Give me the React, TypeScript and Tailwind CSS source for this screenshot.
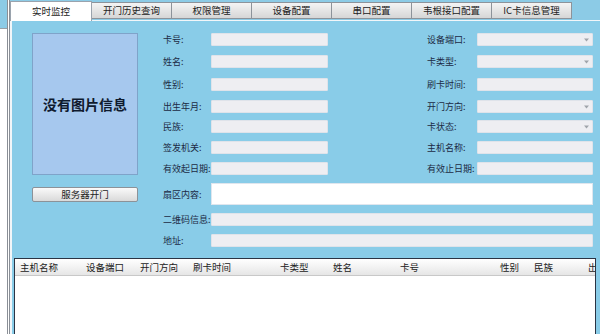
import type React from 'react';

const TABS = ['实时监控', '开门历史查询', '权限管理', '设备配置', '串口配置', '韦根接口配置', 'IC卡信息管理'];

const COLUMNS = [
  { label: '主机名称', w: 'w-[66px]' },
  { label: '设备端口', w: 'w-[54px]' },
  { label: '开门方向', w: 'w-[53px]' },
  { label: '刷卡时间', w: 'w-[87px]' },
  { label: '卡类型', w: 'w-[53px]' },
  { label: '姓名', w: 'w-[67px]' },
  { label: '卡号', w: 'w-[100px]' },
  { label: '性别', w: 'w-[34px]' },
  { label: '民族', w: 'w-[54px]' },
  { label: '出生年月', w: 'w-[60px]' },
];

type Row = { left: string; right: string; rightSelect: boolean; mt: string };

const ROWS: Row[] = [
  { left: '卡号:', right: '设备端口:', rightSelect: true, mt: 'mt-0' },
  { left: '姓名:', right: '卡类型:', rightSelect: true, mt: 'mt-[9px]' },
  { left: '性别:', right: '刷卡时间:', rightSelect: false, mt: 'mt-[10px]' },
  { left: '出生年月:', right: '开门方向:', rightSelect: true, mt: 'mt-[9px]' },
  { left: '民族:', right: '卡状态:', rightSelect: true, mt: 'mt-[7px]' },
  { left: '签发机关:', right: '主机名称:', rightSelect: false, mt: 'mt-[8px]' },
  { left: '有效起日期:', right: '有效止日期:', rightSelect: false, mt: 'mt-[8px]' },
];

const Field: React.FC<{ select?: boolean; className?: string }> = ({ select, className }) => (
  <div
    className={`relative shrink-0 h-[13px] bg-[#eeeef2] border border-[#dfe3ea] rounded-[1px] ${className ?? ''}`}
  >
    {select && (
      <svg className="absolute right-[3px] top-[4px] w-[5px] h-[4px]" viewBox="0 0 5 4">
        <path d="M0 0.5h5L2.5 3.5z" fill="#a0a4aa" />
      </svg>
    )}
  </div>
);

const Label: React.FC<{ text: string; className?: string }> = ({ text, className }) => (
  <div
    className={`shrink-0 overflow-visible text-[9px] leading-[13px] text-[#1c2a44] whitespace-nowrap ${className ?? ''}`}
  >
    {text}
  </div>
);

export default function App() {
  return (
    <div
      className="w-[600px] h-[334px] overflow-hidden bg-white flex"
      style={{ fontFamily: '"Noto Sans CJK SC", "Noto Sans", sans-serif' }}
    >
      {/* left window edge */}
      <div className="w-[10px] shrink-0 flex flex-col border-r-[3px] border-double border-[#8a8f96]">
        <div className="h-[29px] bg-[#8ccbe6] border-b border-[#9aa0a6]" />
        <div className="flex-1 bg-white" />
      </div>

      <div className="flex-1 min-w-0 flex flex-col bg-[#8ccbe6]">
        {/* tabs */}
        <div className="h-[20px] shrink-0 flex items-end">
          {TABS.map((t, i) =>
            i === 0 ? (
              <div
                key={t}
                className="w-[82px] shrink-0 h-[20px] bg-white border border-b-0 border-[#9aa3ad] flex items-center justify-center text-[9.5px] text-[#222] -mb-px z-10"
              >
                {t}
              </div>
            ) : (
              <div
                key={t}
                className="w-[80px] shrink-0 h-[17px] mb-[1px] bg-gradient-to-b from-[#f4f4f4] to-[#d6d6d6] border border-l-0 border-[#8d939a] flex items-center justify-center text-[9.5px] text-[#222]"
              >
                {t}
              </div>
            ),
          )}
        </div>

        {/* tab page */}
        <div className="flex-1 min-h-0 border-t border-l-2 border-[#f2f6f9] bg-[#89cce8] flex flex-col pt-[12px] pr-[4px]">
          <div className="flex">
            <div className="ml-[20px] shrink-0 w-[106px] h-[142px] bg-[#a6c8ee] border border-[#7fa3c9] flex items-center justify-center">
              <span className="text-[14px] font-bold text-[#0f1a2e]">没有图片信息</span>
            </div>
            <div className="ml-[25px] flex flex-col">
              {ROWS.map((r) => (
                <div key={r.left} className={`flex items-center ${r.mt}`}>
                  <Label text={r.left} className="w-[48px]" />
                  <Field className="w-[117px]" />
                  <Label text={r.right} className="ml-[99px] w-[50px]" />
                  <Field select={r.rightSelect} className="w-[116px]" />
                </div>
              ))}
            </div>
          </div>

          <div className="flex items-center mt-[8px]">
            <div className="ml-[20px] shrink-0 w-[106px]">
              <div className="h-[15px] bg-gradient-to-b from-[#fafafa] to-[#d9d9d9] border border-[#8c9298] rounded-[2px] flex items-center justify-center text-[9.5px] text-[#222]">
                服务器开门
              </div>
            </div>
            <Label text="扇区内容:" className="ml-[25px] w-[48px]" />
            <div className="w-[382px] shrink-0 h-[22px] bg-white border border-[#dfe6ee]" />
          </div>

          <div className="flex items-center mt-[8px] pl-[151px]">
            <Label text="二维码信息:" className="w-[48px]" />
            <Field className="w-[382px]" />
          </div>
          <div className="flex items-center mt-[8px] pl-[151px]">
            <Label text="地址:" className="w-[48px]" />
            <Field className="w-[382px]" />
          </div>

          {/* table */}
          <div className="mt-[11px] ml-[2px] flex-1 bg-white border border-[#2a3444] border-b-0 overflow-hidden">
            <div className="h-[17px] bg-gradient-to-b from-white to-[#e6e6e6] border-b border-[#c8c8c8] flex items-center pl-[5px] whitespace-nowrap overflow-hidden">
              {COLUMNS.map((c) => (
                <div key={c.label} className={`${c.w} shrink-0 text-[9.5px] text-[#222]`}>
                  {c.label}
                </div>
              ))}
            </div>
          </div>
        </div>
      </div>
    </div>
  );
}
